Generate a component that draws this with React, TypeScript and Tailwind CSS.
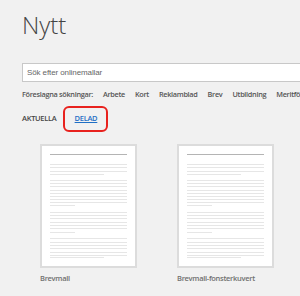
import React from "react";

const suggestions = ["Arbete", "Kort", "Reklamblad", "Brev", "Utbildning", "Meritförteckningar"];

// line layout for the template thumbnail: y of each line, last one in a group is short
const groups: number[][] = [
  [18, 21, 25, 28],
  [34, 37, 40, 44, 47, 50, 53, 56, 59],
  [66, 69, 72, 76, 79, 82, 86],
  [92, 96, 99, 102, 106, 109, 111],
];

const small = { fontFamily: '"Open Sans", "Liberation Sans", sans-serif' };

function DocThumb() {
  return (
    <div className="w-[97px] h-[124px] border-2 border-[#dcdcdc] bg-white">
      <svg width="93" height="120" viewBox="0 0 93 120">
        <line x1="8" y1="8.5" x2="85" y2="8.5" stroke="#b4b4b4" strokeWidth="1" />
        {groups.map((g, gi) =>
          g.map((y, i) => {
            const last = i === g.length - 1;
            const end = last ? (gi === 0 || gi === 3 ? 62 : 33) : 85;
            return (
              <line key={`${gi}-${i}`} x1="8" y1={y + 0.5} x2={end} y2={y + 0.5} stroke="#e6e6e6" strokeWidth="1" />
            );
          })
        )}
      </svg>
    </div>
  );
}

export default function App() {
  return (
    <div
      className="w-[300px] h-[296px] overflow-hidden bg-[#f1f1f1] pl-[22px]"
      style={{ fontFamily: '"Liberation Sans", Arial, sans-serif' }}
    >
      {/* Title */}
      <h1
        className="pt-[11px] text-[24px] leading-[28px] text-[#444444]"
        style={{ fontFamily: '"Open Sans", "Liberation Sans", sans-serif', fontWeight: 300 }}
      >
        Nytt
      </h1>

      {/* Search */}
      <div className="mt-[24px] h-[19px] w-[300px] border border-[#c8c8c8] bg-white flex items-center pl-[4px]">
        <span className="text-[8px] text-[#666666] tracking-[-0.1px]">Sök efter onlinemallar</span>
      </div>

      {/* Suggested searches */}
      <div
        className="mt-[7px] flex items-center gap-[10px] whitespace-nowrap text-[7.3px] font-semibold text-[#555555] tracking-[-0.3px]"
        style={small}
      >
        <span>Föreslagna sökningar:</span>
        {suggestions.map((s) => (
          <span key={s}>{s}</span>
        ))}
      </div>

      {/* Tabs */}
      <div className="mt-[6px] flex items-center text-[7.5px] font-semibold tracking-[-0.3px]" style={small}>
        <span className="text-[#444444]">AKTUELLA</span>
        <span className="ml-[7px] h-[26px] w-[45px] border-2 border-[#e8221e] rounded-[6px] flex items-center justify-center">
          <span className="text-[#1f6fc5] underline underline-offset-[1px] -mt-[1px]">DELAD</span>
        </span>
      </div>

      {/* Templates */}
      <div className="mt-[12px] pl-[18px] flex gap-[40px]">
        <div className="flex flex-col">
          <DocThumb />
          <span className="mt-[5px] text-[7.5px] font-semibold text-[#707070] tracking-[-0.3px]" style={small}>
            Brevmall
          </span>
        </div>
        <div className="flex flex-col">
          <DocThumb />
          <span className="mt-[5px] text-[7.5px] font-semibold text-[#707070] tracking-[-0.3px]" style={small}>
            Brevmall-fonsterkuvert
          </span>
        </div>
      </div>
    </div>
  );
}
